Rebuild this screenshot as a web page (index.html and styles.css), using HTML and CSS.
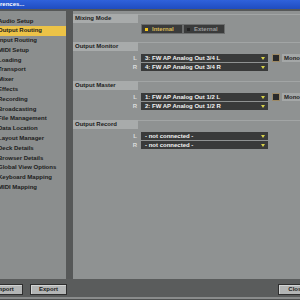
FILE: index.html
```html
<!DOCTYPE html>
<html lang="en">
<head>
    <meta charset="UTF-8">
    <title>Preferences</title>
    <link rel="stylesheet" href="styles.css">
</head>
<body>
    <div class="titlebar"><span class="title">Preferences...</span></div>
    <div class="frame">
        <ul class="nav">
            <li>Audio Setup</li>
            <li class="active">Output Routing</li>
            <li>Input Routing</li>
            <li>MIDI Setup</li>
            <li>Loading</li>
            <li>Transport</li>
            <li>Mixer</li>
            <li>Effects</li>
            <li>Recording</li>
            <li>Broadcasting</li>
            <li>File Management</li>
            <li>Data Location</li>
            <li>Layout Manager</li>
            <li>Deck Details</li>
            <li>Browser Details</li>
            <li>Global View Options</li>
            <li>Keyboard Mapping</li>
            <li>MIDI Mapping</li>
        </ul>
        <div class="panel">
            <section class="group group-mode">
                <div class="group-head"><span>Mixing Mode</span></div>
                <div class="mode">
                    <div class="mode-btn on"><i></i>Internal</div>
                    <div class="mode-btn"><i></i>External</div>
                </div>
            </section>
            <section class="group">
                <div class="group-head"><span>Output Monitor</span></div>
                <div class="route">
                    <span class="ch">L</span>
                    <div class="select">3: FW AP Analog Out 3/4 L<b></b></div>
                    <span class="check"></span>
                    <span class="mono">Mono</span>
                </div>
                <div class="route">
                    <span class="ch">R</span>
                    <div class="select">4: FW AP Analog Out 3/4 R<b></b></div>
                </div>
            </section>
            <section class="group">
                <div class="group-head"><span>Output Master</span></div>
                <div class="route">
                    <span class="ch">L</span>
                    <div class="select">1: FW AP Analog Out 1/2 L<b></b></div>
                    <span class="check"></span>
                    <span class="mono">Mono</span>
                </div>
                <div class="route">
                    <span class="ch">R</span>
                    <div class="select">2: FW AP Analog Out 1/2 R<b></b></div>
                </div>
            </section>
            <section class="group">
                <div class="group-head"><span>Output Record</span></div>
                <div class="route">
                    <span class="ch">L</span>
                    <div class="select">- not connected -<b></b></div>
                </div>
                <div class="route">
                    <span class="ch">R</span>
                    <div class="select">- not connected -<b></b></div>
                </div>
            </section>
        </div>
    </div>
    <div class="footer">
        <div class="btn btn-import">Import</div>
        <div class="btn">Export</div>
        <div class="btn btn-close">Close</div>
    </div>
    <div class="edge"></div>
</body>
</html>
```

FILE: styles.css
```css
body {
    margin: 0;
    width: 300px;
    height: 300px;
    overflow: hidden;
    background-color: #4f5151;
    font-family: "Liberation Sans", Arial, sans-serif;
    font-weight: bold;
    font-size: 6px;
    color: #1c1c1c;
}

.titlebar {
    height: 9px;
    line-height: 9px;
    background: linear-gradient(#2f62dc, #1f4cc0);
    color: #fff;
    white-space: nowrap;
    overflow: hidden;
}

.title {
    display: inline-block;
    margin-left: -15px;
}

.frame {
    display: flex;
    gap: 7px;
    width: 320px;
    height: 270px;
    padding-top: 2px;
    box-sizing: border-box;
    background-color: #565858;
}

.nav {
    flex: 0 0 66px;
    margin: 0;
    padding: 5.5px 0 0;
    list-style: none;
    background-color: #8b8e8e;
}

.nav li {
    height: 9.8px;
    line-height: 9.8px;
    text-indent: -2px;
    white-space: nowrap;
    overflow: hidden;
}

.nav li.active {
    background-color: #ecc347;
}

.panel {
    flex: 1;
    padding-top: 3px;
    background-color: #8f9292;
}

.group {
    height: 39px;
}

.group-mode {
    height: 28px;
}

.group-head {
    height: 9px;
    box-shadow: inset 0 1px #a2a5a5;
}

.group-head span {
    display: block;
    width: 63px;
    padding-left: 2px;
    line-height: 9px;
    background-color: #a8abab;
}

/* mixing mode toggle */
.mode {
    display: flex;
    height: 10px;
    margin: 1px 0 0 68px;
}

.mode-btn {
    display: flex;
    align-items: center;
    gap: 4px;
    width: 42px;
    padding-left: 3px;
    box-sizing: border-box;
    border: 1px solid #6b6d6d;
    background-color: #3a3b3b;
    color: #9a9c9c;
}

.mode-btn i {
    width: 3px;
    height: 3px;
    background-color: #222;
}

.mode-btn.on {
    color: #dcbc58;
}

.mode-btn.on i {
    background-color: #f4c51c;
}

/* routing rows */
.route {
    display: flex;
    align-items: center;
    height: 8px;
    margin-bottom: 1px;
}

.group-head + .route {
    margin-top: 3px;
}

.ch {
    width: 64px;
    padding-right: 1px;
    text-align: right;
    color: #dadcdc;
}

.select {
    display: flex;
    align-items: center;
    width: 123px;
    height: 8px;
    margin-left: 3px;
    padding-left: 4px;
    background-color: #393a3a;
    color: #f2f2f2;
    white-space: nowrap;
}

.select b {
    margin-left: auto;
    margin-right: 3px;
    border-left: 2px solid transparent;
    border-right: 2px solid transparent;
    border-top: 3px solid #d8d24a;
}

.check {
    width: 6px;
    height: 6px;
    margin-left: 4px;
    border: 1px solid #9c8966;
    background-color: #2a2a2a;
}

.mono {
    width: 28px;
    height: 8px;
    margin-left: 2px;
    padding-left: 2px;
    line-height: 8px;
    background-color: #a4a7a7;
    color: #1e1e1e;
}

/* bottom buttons */
.footer {
    display: flex;
    gap: 7px;
    width: 315px;
    height: 18px;
    padding-top: 5px;
    box-sizing: border-box;
    background-color: #5a5c5c;
}

.btn {
    width: 37px;
    height: 11px;
    box-sizing: border-box;
    border: 1px solid #2e2e2e;
    background-color: #b3b5b5;
    box-shadow: inset 1px 1px #d2d4d4;
    line-height: 9px;
    text-align: center;
    color: #1a1a1a;
}

.btn-import {
    margin-left: -14px;
}

.btn-close {
    margin-left: auto;
}

.edge {
    height: 2px;
    background-color: #8a8c8c;
}
```
